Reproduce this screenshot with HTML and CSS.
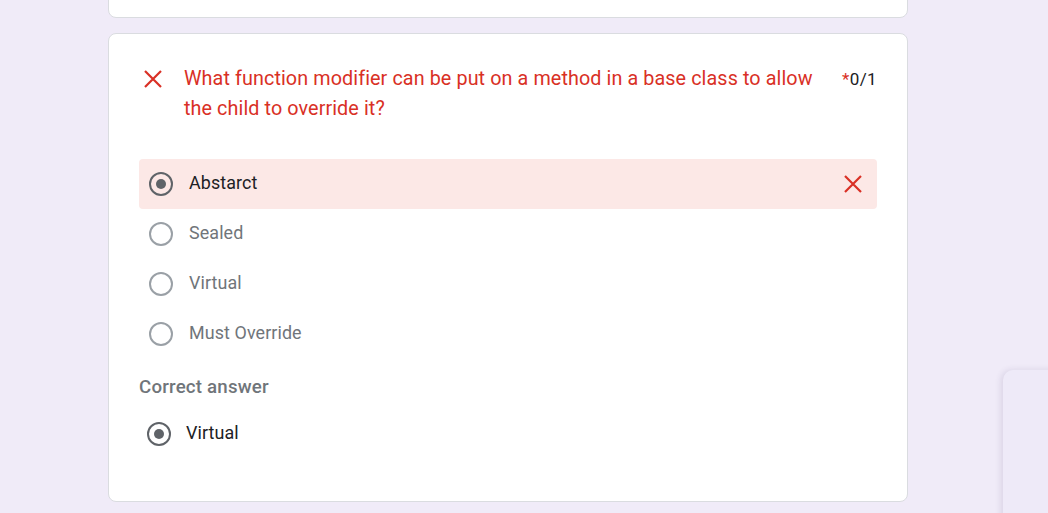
FILE: index.html
```html
<!DOCTYPE html>
<html>
<head>
<meta charset="utf-8">
<link rel="stylesheet" href="styles.css">
</head>
<body>
<div class="page">
  <div class="card card-prev"></div>
  <div class="card">
    <div class="q-head">
      <svg class="x-icon" viewBox="0 0 18 18" width="18" height="18"><path d="M1 1L17 17M17 1L1 17" stroke="#d93025" stroke-width="2.2" fill="none"/></svg>
      <div class="q-text">What function modifier can be put on a method in a base class to allow the child to override it?</div>
      <div class="score"><span class="star">*</span>0/1</div>
    </div>
    <div class="options">
      <div class="opt wrong">
        <span class="radio checked"></span>
        <span class="label dark">Abstarct</span>
        <svg class="x-icon small" viewBox="0 0 18 18" width="18" height="18"><path d="M1 1L17 17M17 1L1 17" stroke="#d93025" stroke-width="2.2" fill="none"/></svg>
      </div>
      <div class="opt"><span class="radio"></span><span class="label">Sealed</span></div>
      <div class="opt"><span class="radio"></span><span class="label">Virtual</span></div>
      <div class="opt"><span class="radio"></span><span class="label">Must Override</span></div>
    </div>
    <div class="correct-title">Correct answer</div>
    <div class="opt correct"><span class="radio checked"></span><span class="label dark">Virtual</span></div>
  </div>
</div>
<div class="float-panel"></div>
</body>
</html>
```
FILE: styles.css
```css
html, body {
  margin: 0;
  padding: 0;
  background: #f0ebf8;
  font-family: Roboto, "Liberation Sans", Arial, sans-serif;
  overflow: hidden;
  height: 513px;
}
.page {
  width: 800px;
  margin-left: 108px;
  margin-top: -83px;
  display: flex;
  flex-direction: column;
  gap: 15px;
}
.card {
  background: #fff;
  border: 1px solid #dadce0;
  border-radius: 8px;
  box-sizing: border-box;
  padding: 30px 30px 0 30px;
  height: 469px;
}
.card-prev {
  height: 101px;
  padding: 0;
}
.q-head {
  display: flex;
  align-items: flex-start;
}
.q-head .x-icon {
  flex: none;
  margin: 6px 0 0 5px;
}
.q-text {
  flex: 1;
  margin-left: 22px;
  color: #d93025;
  font-size: 19.75px;
  line-height: 30px;
  letter-spacing: 0.1px;
  padding-right: 22px;
}
.score {
  flex: none;
  font-size: 17px;
  line-height: 30px;
  color: #202124;
  letter-spacing: 0.4px;
}
.star { color: #d93025; }
.options {
  margin-top: 35px;
  display: flex;
  flex-direction: column;
}
.opt {
  height: 50px;
  display: flex;
  align-items: center;
  padding-left: 10px;
  border-radius: 4px;
}
.opt.wrong {
  background: #fce8e6;
}
.radio {
  flex: none;
  border: 2px solid #9aa0a6;
  border-radius: 50%;
  box-sizing: border-box;
  position: relative;
  width: 24px;
  height: 24px;
}
.radio.checked {
  border-color: #5f6368;
}
.radio.checked::after {
  content: "";
  position: absolute;
  left: 5px;
  top: 5px;
  width: 10px;
  height: 10px;
  border-radius: 50%;
  background: #5f6368;
}
.label {
  margin-left: 16px;
  font-size: 17.9px;
  color: #70757a;
  letter-spacing: 0.1px;
  padding-bottom: 3px;
}
.label.dark { color: #202124; }
.opt .x-icon.small {
  margin-left: auto;
  margin-right: 15px;
}
.correct-title {
  margin-top: 14px;
  font-size: 18.7px;
  font-weight: 500;
  color: #70757a;
  line-height: 28px;
  letter-spacing: 0.2px;
}
.opt.correct {
  padding-left: 8px;
  margin-top: 8px;
}
.opt.correct .label { margin-left: 15px; }
.float-panel {
  position: absolute;
  left: 1003px;
  top: 370px;
  width: 60px;
  height: 200px;
  background: #eeeaf8;
  border-radius: 10px 0 0 0;
  box-shadow: -2px 0 6px rgba(60, 40, 100, 0.12);
}
```
